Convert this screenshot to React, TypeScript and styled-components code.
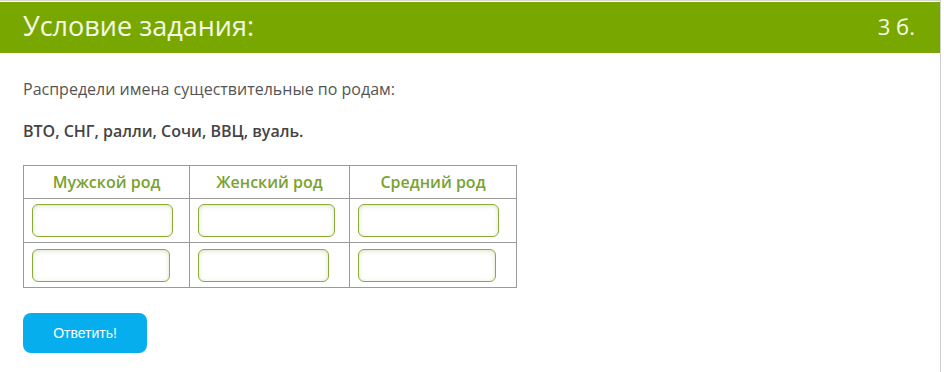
import React from 'react';
import styled, { createGlobalStyle } from 'styled-components';

const GlobalStyle = createGlobalStyle`
  body {
    margin: 0;
    background: #fff;
    font-family: "Open Sans", "Liberation Sans", sans-serif;
  }
`;

const Panel = styled.div`
  width: 941px;
  height: 372px;
  border-top: 1px solid #d6d6d6;
  border-right: 1px solid #cfcfcf;
  box-sizing: border-box;
`;

const Header = styled.div`
  height: 51px;
  background: #78a800;
  display: flex;
  align-items: center;
  justify-content: space-between;
  padding: 0 25px 0 23px;
  color: #f4fae6;
  margin-top: 1px;
`;

const Title = styled.div`
  font-size: 27px;
  line-height: 1;
  margin-top: -4px;
`;

const Points = styled.div`
  font-size: 22px;
  line-height: 1;
  margin-top: -3px;
`;

const Body = styled.div`
  padding: 26px 23px 0;
  color: #555;
`;

const Text = styled.p<{ bold?: boolean }>`
  margin: 0 0 21px;
  font-size: 16px;
  line-height: 21px;
  font-weight: ${p => (p.bold ? 600 : 400)};
  color: ${p => (p.bold ? '#444' : '#555')};
`;

const Table = styled.table`
  border-collapse: collapse;
  margin-top: 23px;
`;

const Th = styled.th<{ w: number }>`
  width: ${p => p.w}px;
  height: 33px;
  border: 1px solid #9a9a9a;
  color: #7aa232;
  font-size: 16px;
  font-weight: 600;
  padding: 0;
  box-sizing: border-box;
`;

const Td = styled.td<{ h: number }>`
  border: 1px solid #9a9a9a;
  height: ${p => p.h}px;
  padding: 0 8px;
  box-sizing: border-box;
`;

const Field = styled.input<{ w: number }>`
  display: block;
  width: ${p => p.w}px;
  height: 33px;
  box-sizing: border-box;
  border: 1px solid #8aab3a;
  border-radius: 6px;
  box-shadow: inset 0 1px 4px rgba(130, 160, 60, 0.3);
  background: #fff;
  outline: none;
`;

const Button = styled.button`
  margin-top: 25px;
  width: 124px;
  height: 40px;
  border: none;
  border-radius: 8px;
  background: #07aeed;
  color: #fff;
  font-family: "Liberation Sans", Arial, sans-serif;
  font-size: 14px;
  cursor: pointer;
`;

const columns = [
  { title: 'Мужской род', w: 166 },
  { title: 'Женский род', w: 160 },
  { title: 'Средний род', w: 167 },
];

const rows = [
  { h: 44, widths: [141, 137, 141] },
  { h: 45, widths: [138, 131, 138] },
];

export default function App() {
  return (
    <>
      <GlobalStyle />
      <Panel>
        <Header>
          <Title>Условие задания:</Title>
          <Points>3 б.</Points>
        </Header>
        <Body>
          <Text>Распредели имена существительные по родам:</Text>
          <Text bold>ВТО, СНГ, ралли, Сочи, ВВЦ, вуаль.</Text>
          <Table>
            <thead>
              <tr>
                {columns.map(c => (
                  <Th key={c.title} w={c.w}>
                    {c.title}
                  </Th>
                ))}
              </tr>
            </thead>
            <tbody>
              {rows.map((r, i) => (
                <tr key={i}>
                  {r.widths.map((w, j) => (
                    <Td key={j} h={r.h}>
                      <Field w={w} />
                    </Td>
                  ))}
                </tr>
              ))}
            </tbody>
          </Table>
          <Button>Ответить!</Button>
        </Body>
      </Panel>
    </>
  );
}
